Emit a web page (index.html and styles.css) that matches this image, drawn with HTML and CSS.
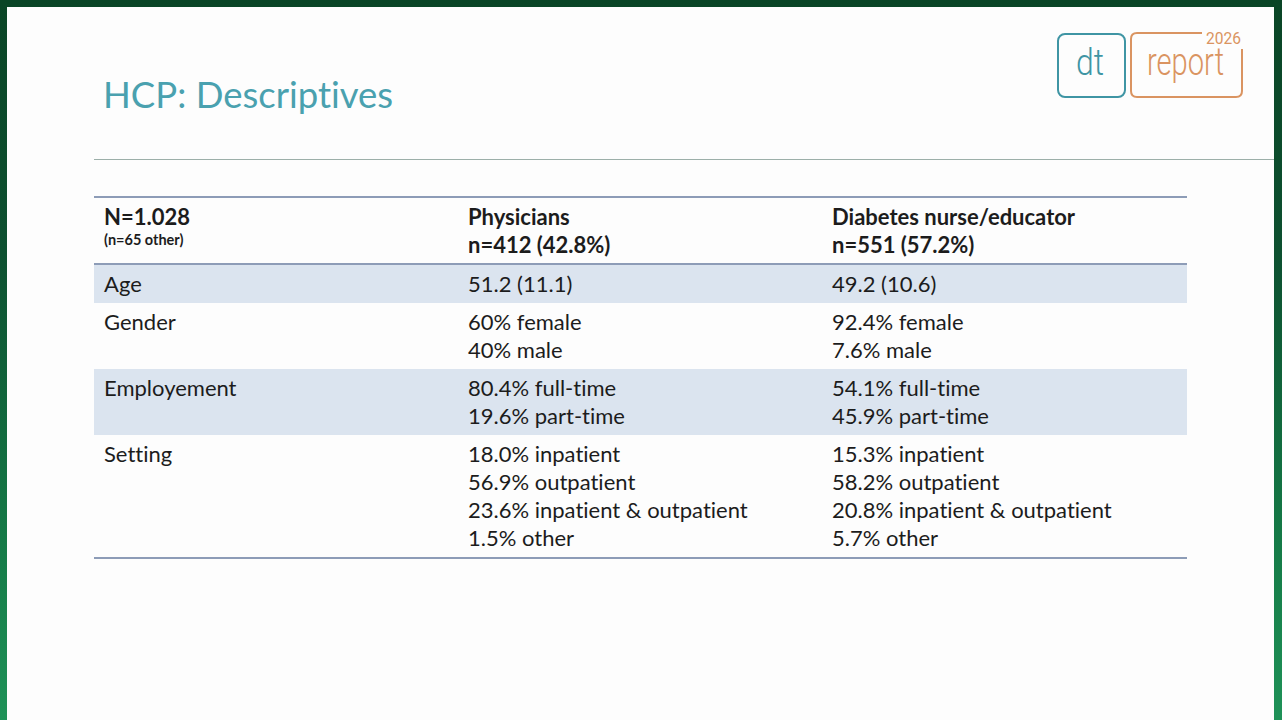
FILE: index.html
```html
<!DOCTYPE html>
<html lang="en">
<head>
<meta charset="utf-8">
<title>HCP: Descriptives</title>
<link rel="stylesheet" href="styles.css">
</head>
<body>
<div class="slide">
  <div class="header">
    <h1 class="title">HCP: Descriptives</h1>
    <svg class="logo" width="192" height="72" viewBox="0 0 192 72" aria-label="dt report 2026">
      <rect x="4" y="6" width="67" height="63" rx="7" ry="7" fill="none" stroke="#3f95a4" stroke-width="2"/>
      <text x="22" y="47" class="logo-dt" textLength="28" lengthAdjust="spacingAndGlyphs">dt</text>
      <path d="M148 5 L83 5 Q77 5 77 11 L77 63 Q77 69 83 69 L182 69 Q188 69 188 63 L188 21" fill="none" stroke="#da9461" stroke-width="2"/>
      <text x="93" y="47" class="logo-report" textLength="77" lengthAdjust="spacingAndGlyphs">report</text>
      <text x="152" y="16" class="logo-year" textLength="35" lengthAdjust="spacingAndGlyphs">2026</text>
    </svg>
  </div>
  <div class="rule"></div>
  <table class="data">
    <colgroup>
      <col class="c1"><col class="c2"><col class="c3">
    </colgroup>
    <thead>
      <tr>
        <th>N=1.028<span class="sub">(n=65 other)</span></th>
        <th>Physicians<br>n=412 (42.8%)</th>
        <th>Diabetes nurse/educator<br>n=551 (57.2%)</th>
      </tr>
    </thead>
    <tbody>
      <tr class="band">
        <td>Age</td>
        <td>51.2 (11.1)</td>
        <td>49.2 (10.6)</td>
      </tr>
      <tr>
        <td>Gender</td>
        <td>60% female<br>40% male</td>
        <td>92.4% female<br>7.6% male</td>
      </tr>
      <tr class="band">
        <td>Employement</td>
        <td>80.4% full-time<br>19.6% part-time</td>
        <td>54.1% full-time<br>45.9% part-time</td>
      </tr>
      <tr>
        <td>Setting</td>
        <td>18.0% inpatient<br>56.9% outpatient<br>23.6% inpatient &amp; outpatient<br>1.5% other</td>
        <td>15.3% inpatient<br>58.2% outpatient<br>20.8% inpatient &amp; outpatient<br>5.7% other</td>
      </tr>
    </tbody>
  </table>
</div>
</body>
</html>
```

FILE: styles.css
```css
html, body {
  margin: 0;
  padding: 0;
}

body {
  width: 1282px;
  height: 720px;
  overflow: hidden;
  background: linear-gradient(180deg, #0a4526 0%, #0d5030 35%, #157a47 75%, #1f9258 100%);
}

.slide {
  margin: 7px 8px 0 7px;
  height: 713px;
  box-sizing: border-box;
  background: #fdfdfd;
  padding-left: 87px;
}

.header {
  display: flex;
  justify-content: space-between;
  align-items: flex-start;
  height: 152px;
}

.title {
  margin: 0 0 0 9px;
  padding-top: 65px;
  font-family: Lato, "Open Sans", sans-serif;
  font-variant-ligatures: none;
  font-weight: 400;
  font-size: 36.5px;
  line-height: 44px;
  color: #4aa1af;
}

.logo {
  display: block;
  margin-top: 21px;
  margin-right: 28px;
}

.logo-dt {
  font-family: Roboto, sans-serif;
  font-weight: 300;
  font-size: 37px;
  fill: #3f95a4;
}

.logo-report {
  font-family: Roboto, sans-serif;
  font-weight: 300;
  font-size: 38px;
  fill: #da9461;
}

.logo-year {
  font-family: Roboto, sans-serif;
  font-weight: 400;
  font-size: 16px;
  fill: #da9461;
}

.rule {
  border-top: 1px solid #9cafa9;
}

.data {
  margin-top: 36px;
  width: 1093px;
  border-collapse: collapse;
  table-layout: fixed;
  font-family: Lato, "Open Sans", sans-serif;
  font-variant-ligatures: none;
  font-size: 22px;
  line-height: 28px;
  color: #1c1c1c;
}

.c1, .c2 { width: 364px; }
.c3 { width: 365px; }

.data thead tr {
  border-top: 2px solid #8d9cb7;
  border-bottom: 2px solid #8d9cb7;
}

.data tbody tr:last-child {
  border-bottom: 2px solid #8d9cb7;
}

.data th {
  text-align: left;
  vertical-align: top;
  font-weight: 700;
  padding: 5px 10px 4px;
}

.data td {
  vertical-align: top;
  padding: 5px 10px;
}

.sub {
  display: block;
  font-size: 14.5px;
  line-height: 18px;
}

.band {
  background: #dbe4ef;
}
```
